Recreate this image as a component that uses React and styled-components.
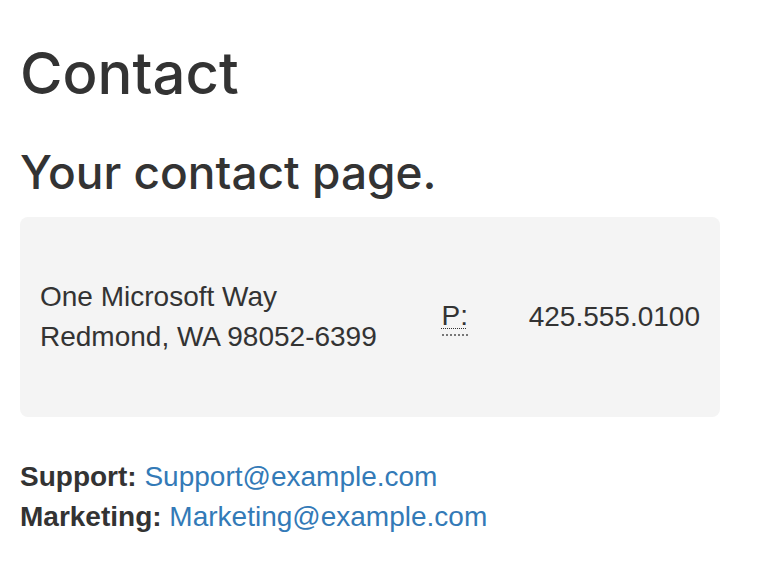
import React from "react";
import styled, { createGlobalStyle } from "styled-components";

const Global = createGlobalStyle`
  html, body { margin: 0; padding: 0; background: #fff; }
  body {
    font-family: "Liberation Sans", Arial, Helvetica, sans-serif;
    font-size: 28px;
    line-height: 40px;
    color: #333;
  }
`;

const Page = styled.main`
  padding: 0 20px;
  overflow: hidden;
`;

const Heading = styled.h2`
  font-family: Inter, "Liberation Sans", Arial, sans-serif;
  font-size: ${(p) => p.$size}px;
  font-weight: 500;
  line-height: ${(p) => p.$lh}px;
  margin: ${(p) => p.$margin};
`;

const InfoCard = styled.address`
  font-style: normal;
  width: 700px;
  height: 200px;
  box-sizing: border-box;
  padding: 0 20px;
  background: #f4f4f4;
  border-radius: 8px;
  display: flex;
  align-items: center;
  justify-content: space-between;
  margin: 0 0 40px;
`;

const Lines = styled.div`
  display: flex;
  flex-direction: column;
`;

const Abbr = styled.abbr`
  text-decoration: underline dotted #333;
  text-decoration-thickness: 1px;
  text-underline-offset: 3px;
  border-bottom: 2px dotted #777;
  cursor: help;
  line-height: 36px;
  margin-left: 4px;
`;

const Emails = styled.address`
  font-style: normal;
  margin: 0;
`;

const Label = styled.strong`
  font-weight: 700;
`;

const Link = styled.a`
  color: #337ab7;
  text-decoration: none;
`;

export default function App() {
  return (
    <>
      <Global />
      <Page>
        <Heading $size={58} $lh={66} $margin="40px 0 20px">Contact</Heading>
        <Heading as="h3" $size={46} $lh={53} $margin="40px 0 18px">Your contact page.</Heading>
        <InfoCard>
          <Lines>
            <span>One Microsoft Way</span>
            <span>Redmond, WA 98052-6399</span>
          </Lines>
          <Abbr title="Phone">P:</Abbr>
          <span>425.555.0100</span>
        </InfoCard>
        <Emails>
          <Label>Support:</Label> <Link href="mailto:Support@example.com">Support@example.com</Link>
          <br />
          <Label>Marketing:</Label> <Link href="mailto:Marketing@example.com">Marketing@example.com</Link>
        </Emails>
      </Page>
    </>
  );
}
